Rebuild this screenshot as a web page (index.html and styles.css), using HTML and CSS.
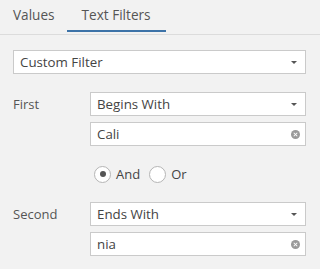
FILE: index.html
```html
<!DOCTYPE html>
<html>
	<head>
		<meta charset="UTF-8">
		<title>Text Filters</title>
		<link rel="stylesheet" href="styles.css">
	</head>
	<body>
		<div class="tabs">
			<span class="tab">Values</span>
			<span class="tab on">Text Filters</span>
		</div>
		<div class="panel">
			<div class="box pick top">Custom Filter<i class="caret"></i></div>
			<div class="grid">
				<span class="lbl">First</span>
				<div class="box pick">Begins With<i class="caret"></i></div>
				<span></span>
				<div class="box">Cali<i class="clr"></i></div>
				<span></span>
				<div class="radios">
					<label class="rad"><i class="dot on"></i>And</label>
					<label class="rad"><i class="dot"></i>Or</label>
				</div>
				<span class="lbl">Second</span>
				<div class="box pick">Ends With<i class="caret"></i></div>
				<span></span>
				<div class="box">nia<i class="clr"></i></div>
			</div>
		</div>
	</body>
</html>
```

FILE: styles.css
```css
*{margin:0;padding:0;box-sizing:border-box;}
html,body{background:#f2f2f2;}
body{width:320px;height:269px;font-family:"Open Sans","Noto Sans",sans-serif;font-size:13px;color:#444;overflow:hidden;}
.tabs{height:35px;border-bottom:1px solid #dcdcdc;display:flex;align-items:flex-start;}
.tab{height:32px;line-height:30px;padding:0 12px 0 13px;color:#555;font-size:13.6px;}
.tab.on{padding:0 15px;border-bottom:2px solid #3d73a8;}
.panel{padding:15px 14px 0 13px;}
.box{position:relative;height:24px;line-height:22px;background:#fff;border:1px solid #cacaca;padding-left:6px;font-size:13.3px;}
.top{margin-bottom:18px;}
.caret{position:absolute;right:8px;top:10px;width:0;height:0;border-left:3px solid transparent;border-right:3px solid transparent;border-top:3px solid #555;}
.clr{position:absolute;right:5px;top:7px;width:9px;height:9px;border-radius:50%;background:#9a9a9a;}
.clr:before,.clr:after{content:"";position:absolute;left:4px;top:2px;width:1px;height:5px;background:#fff;transform:rotate(45deg);}
.clr:after{transform:rotate(-45deg);}
.grid{display:grid;grid-template-columns:77px 1fr;row-gap:6px;}
.lbl{line-height:24px;color:#555;}
.radios{height:44px;display:flex;align-items:center;padding-left:4px;gap:9px;}
.rad{display:flex;align-items:center;gap:5px;color:#444;}
.dot{width:17px;height:17px;border:1px solid #b5b5b5;border-radius:50%;background:#fff;position:relative;}
.dot.on:after{content:"";position:absolute;left:4.5px;top:4.5px;width:6px;height:6px;border-radius:50%;background:#555;}
```
